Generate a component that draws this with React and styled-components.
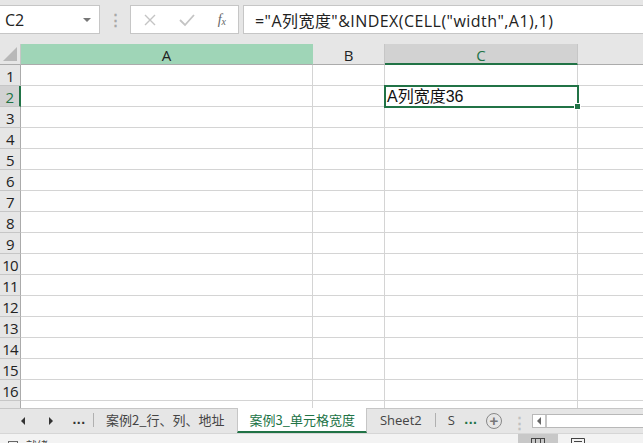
import React from 'react';
import styled, { createGlobalStyle } from 'styled-components';

const GlobalStyle = createGlobalStyle`
  html, body {
    margin: 0;
    padding: 0;
    background: #e6e6e6;
    font-family: "Liberation Sans", "Noto Sans CJK SC", sans-serif;
    overflow: hidden;
  }
`;

const COLS = [
  { name: 'A', width: 292 },
  { name: 'B', width: 72 },
  { name: 'C', width: 193 },
];
const SELECTED_COL = 'C';
const SELECTED_ROW = 2;

function App() {
  const rows = Array.from({ length: 17 }, (_, i) => i + 1);
  return (
    <Page>
      <GlobalStyle />
      <FormulaBar>
        <NameBox>
          <span>C2</span>
          <Caret />
        </NameBox>
        <Grip>⋮</Grip>
        <ActionBox>
          <svg width="14" height="14" viewBox="0 0 14 14">
            <path d="M2 2 L12 12 M12 2 L2 12" stroke="#c4c4c4" strokeWidth="1.4" />
          </svg>
          <svg width="16" height="14" viewBox="0 0 16 14">
            <path d="M1 7 L6 12 L15 2" stroke="#c4c4c4" strokeWidth="1.8" fill="none" />
          </svg>
          <Fx>
            f<sub>x</sub>
          </Fx>
        </ActionBox>
        <FormulaInput>="A列宽度"&amp;INDEX(CELL("width",A1),1)</FormulaInput>
      </FormulaBar>

      <Sheet>
        <HeaderRow>
          <Corner>
            <svg width="14" height="14" viewBox="0 0 14 14">
              <path d="M14 0 L14 14 L0 14 Z" fill="#b8b8b8" />
            </svg>
          </Corner>
          {COLS.map((c) => (
            <ColHeader key={c.name} $w={c.width} $kind={c.name === 'A' ? 'green' : c.name === SELECTED_COL ? 'sel' : ''}>
              {c.name}
            </ColHeader>
          ))}
          <ColFill />
        </HeaderRow>
        {rows.map((r) => (
          <Row key={r}>
            <RowHeader $sel={r === SELECTED_ROW}>{r}</RowHeader>
            {COLS.map((c) => (
              <Cell key={c.name} $w={c.width}>
                {r === SELECTED_ROW && c.name === SELECTED_COL && (
                  <Selection>
                    A列宽度36
                    <Handle />
                  </Selection>
                )}
              </Cell>
            ))}
            <CellFill />
          </Row>
        ))}
      </Sheet>

      <TabBar>
        <NavArrow>
          <svg width="6" height="8" viewBox="0 0 6 8"><path d="M5 0 L5 8 L1 4 Z" fill="#333" /></svg>
        </NavArrow>
        <NavArrow>
          <svg width="6" height="8" viewBox="0 0 6 8"><path d="M1 0 L1 8 L5 4 Z" fill="#333" /></svg>
        </NavArrow>
        <More>...</More>
        <Tab $first>案例2_行、列、地址</Tab>
        <Tab $active>案例3_单元格宽度</Tab>
        <Tab $latin>Sheet2</Tab>
        <Tab $latin $cut $divider>S</Tab>
        <More $green>...</More>
        <AddButton>+</AddButton>
        <Grip $tab>⋮</Grip>
        <ScrollBox>
          <svg width="6" height="8" viewBox="0 0 6 8"><path d="M5 0 L5 8 L1 4 Z" fill="#666" /></svg>
        </ScrollBox>
      </TabBar>

      <StatusBar>
        <StatusLeft>
          <svg width="10" height="8" viewBox="0 0 10 8"><rect x="0.5" y="0.5" width="9" height="7" fill="none" stroke="#666" /></svg>
          <span>就绪</span>
        </StatusLeft>
        <ViewButton $active>
          <svg width="14" height="8" viewBox="0 0 14 8"><path d="M0.5 0.5 H13.5 M4.5 0 V8 M9.5 0 V8 M0.5 0 V8 M13.5 0 V8" stroke="#444" fill="none" /></svg>
        </ViewButton>
        <ViewButton>
          <svg width="14" height="8" viewBox="0 0 14 8"><path d="M0.5 0.5 H13.5 V8 M0.5 0 V8 M3 3.5 H11" stroke="#444" fill="none" /></svg>
        </ViewButton>
      </StatusBar>
    </Page>
  );
}

export default App;

const Page = styled.div`
  width: 643px;
  height: 443px;
  display: flex;
  flex-direction: column;
  background: #e6e6e6;
  overflow: hidden;
`;

const FormulaBar = styled.div`
  height: 44px;
  box-sizing: border-box;
  padding-top: 5px;
  display: flex;
  align-items: flex-start;
  flex-shrink: 0;
`;

const NameBox = styled.div`
  width: 100px;
  height: 29px;
  box-sizing: border-box;
  background: #fff;
  border: 1px solid #c6c6c6;
  border-left: none;
  display: flex;
  align-items: center;
  justify-content: space-between;
  padding: 0 8px 0 5px;
  font-family: "Open Sans", sans-serif;
  font-size: 16px;
  color: #222;
`;

const Caret = styled.span`
  width: 0;
  height: 0;
  border-left: 4px solid transparent;
  border-right: 4px solid transparent;
  border-top: 4px solid #777;
`;

const Grip = styled.span`
  width: ${(p) => (p.$tab ? '24px' : '30px')};
  text-align: center;
  color: ${(p) => (p.$tab ? '#c0c0c0' : '#a8a8a8')};
  font-size: 15px;
  font-weight: bold;
  line-height: ${(p) => (p.$tab ? '25px' : '29px')};
`;

const ActionBox = styled.div`
  width: 109px;
  height: 29px;
  box-sizing: border-box;
  background: #fff;
  border: 1px solid #c6c6c6;
  display: flex;
  align-items: center;
  justify-content: space-between;
  padding: 0 12px 0 12px;
`;

const Fx = styled.span`
  font-family: "Liberation Serif", serif;
  font-style: italic;
  font-size: 14px;
  color: #666;
  sub {
    font-size: 10px;
    vertical-align: -1px;
  }
`;

const FormulaInput = styled.div`
  margin-left: 4px;
  flex: 1;
  height: 29px;
  box-sizing: border-box;
  background: #fff;
  border: 1px solid #c6c6c6;
  border-right: none;
  display: flex;
  align-items: center;
  padding-left: 11px;
  font-size: 16px;
  color: #222;
  white-space: nowrap;
  font-family: "Open Sans", "Noto Sans CJK SC", sans-serif;
  letter-spacing: 0.45px;
`;

const Sheet = styled.div`
  height: 364px;
  overflow: hidden;
  background: #fff;
  flex-shrink: 0;
`;

const HeaderRow = styled.div`
  display: flex;
  height: 21px;
  background: #e6e6e6;
`;

const Corner = styled.div`
  width: 21px;
  box-sizing: border-box;
  border-right: 1px solid #c6c6c6;
  border-bottom: 1px solid #ababab;
  display: flex;
  align-items: flex-end;
  justify-content: flex-end;
  padding: 0 3px 3px 0;
`;

const ColHeader = styled.div`
  width: ${(p) => p.$w}px;
  box-sizing: border-box;
  border-right: 1px solid ${(p) => (p.$kind === 'green' ? '#9fd5b7' : '#c6c6c6')};
  border-bottom: ${(p) => (p.$kind === 'sel' ? '2px solid #217346' : '1px solid #ababab')};
  background: ${(p) => (p.$kind === 'green' ? '#9fd5b7' : p.$kind === 'sel' ? '#d2d2d2' : '#e6e6e6')};
  color: ${(p) => (p.$kind === 'sel' ? '#217346' : '#222')};
  display: flex;
  align-items: center;
  justify-content: center;
  font-family: "Open Sans", sans-serif;
  font-size: 15px;
  padding-top: 2px;
`;

const ColFill = styled.div`
  flex: 1;
  border-bottom: 1px solid #ababab;
`;

const Row = styled.div`
  display: flex;
  height: 21px;
`;

const RowHeader = styled.div`
  width: 21px;
  box-sizing: border-box;
  background: ${(p) => (p.$sel ? '#d2d2d2' : '#e6e6e6')};
  border-right: ${(p) => (p.$sel ? '2px solid #217346' : '1px solid #ababab')};
  border-bottom: 1px solid #c6c6c6;
  color: ${(p) => (p.$sel ? '#217346' : '#222')};
  font-family: "Open Sans", sans-serif;
  font-size: 15px;
  display: flex;
  align-items: center;
  justify-content: center;
  padding-top: 1px;
  letter-spacing: -0.8px;
`;

const Cell = styled.div`
  position: relative;
  width: ${(p) => p.$w}px;
  box-sizing: border-box;
  border-right: 1px solid #d4d4d4;
  border-bottom: 1px solid #d4d4d4;
`;

const CellFill = styled.div`
  flex: 1;
  border-bottom: 1px solid #d4d4d4;
`;

const Selection = styled.div`
  position: absolute;
  left: -1px;
  top: -1px;
  width: 195px;
  height: 23px;
  box-sizing: border-box;
  border: 2px solid #217346;
  z-index: 2;
  background: #fff;
  font-family: "Liberation Sans", "Noto Sans CJK SC", sans-serif;
  font-size: 16px;
  color: #111;
  padding-left: 1px;
  line-height: 19px;
`;

const Handle = styled.span`
  position: absolute;
  right: -4px;
  bottom: -4px;
  width: 5px;
  height: 5px;
  background: #217346;
  border: 1px solid #fff;
`;

const TabBar = styled.div`
  height: 25px;
  box-sizing: border-box;
  border-top: 1px solid #c6c6c6;
  display: flex;
  align-items: stretch;
  padding-left: 9px;
  font-family: "Noto Sans CJK SC", sans-serif;
  font-size: 13px;
  flex-shrink: 0;
`;

const NavArrow = styled.div`
  width: 28px;
  display: flex;
  align-items: center;
  justify-content: center;
`;

const More = styled.div`
  width: ${(p) => (p.$green ? '22px' : '28px')};
  display: flex;
  align-items: center;
  justify-content: center;
  font-weight: bold;
  font-family: "Liberation Sans", sans-serif;
  font-size: 14px;
  color: ${(p) => (p.$green ? '#217346' : '#333')};
  letter-spacing: 0.5px;
  padding-bottom: 4px;
  box-sizing: border-box;
`;

const Tab = styled.div`
  position: relative;
  margin-top: -1px;
  display: flex;
  align-items: center;
  padding: ${(p) => (p.$cut ? '0 4px 0 12px' : p.$active ? '0 11px' : '0 12px')};
  color: ${(p) => (p.$active ? '#217346' : '#444')};
  background: ${(p) => (p.$active ? '#fff' : 'transparent')};
  border-left: 1px solid ${(p) => (p.$active ? '#c6c6c6' : 'transparent')};
  border-right: 1px solid ${(p) => (p.$active ? '#c6c6c6' : 'transparent')};
  border-bottom: 2px solid ${(p) => (p.$active ? '#217346' : 'transparent')};
  box-sizing: border-box;
  white-space: nowrap;
  font-family: ${(p) => (p.$latin ? '"Open Sans", sans-serif' : '"Noto Sans CJK SC", sans-serif')};
  font-size: 13px;
  &::before {
    content: '';
    position: absolute;
    left: -1px;
    top: 5px;
    bottom: 4px;
    width: 1px;
    background: #b0b0b0;
    display: ${(p) => (p.$first || p.$divider ? 'block' : 'none')};
  }
`;

const AddButton = styled.div`
  margin: 4px 6px 0 4px;
  width: 14px;
  height: 14px;
  border-radius: 50%;
  border: 1.5px solid #888;
  color: #777;
  font-family: "Liberation Sans", sans-serif;
  font-size: 15px;
  line-height: 13px;
  text-align: center;
  font-weight: bold;
`;

const ScrollBox = styled.div`
  margin: 5px 0 5px 0;
  flex: 1;
  background: #fff;
  border: 1px solid #b8b8b8;
  border-right: none;
  display: flex;
  align-items: center;
  padding-left: 3px;
  position: relative;
  &::after {
    content: '';
    position: absolute;
    left: 12px;
    top: 0;
    bottom: 0;
    width: 2px;
    background: #c6c6c6;
  }
`;

const StatusBar = styled.div`
  flex: 1;
  background: #f3f3f3;
  border-top: 1px solid #d6d6d6;
  display: flex;
  align-items: flex-start;
  font-family: "Noto Sans CJK SC", sans-serif;
  font-size: 11px;
  color: #444;
  overflow: hidden;
`;

const StatusLeft = styled.div`
  display: flex;
  align-items: center;
  gap: 8px;
  padding: 3px 0 0 8px;
  flex: 1;
`;

const ViewButton = styled.div`
  width: 40px;
  height: 12px;
  display: flex;
  justify-content: center;
  padding-top: 4px;
  background: ${(p) => (p.$active ? '#c8c8c8' : 'transparent')};
  margin-right: ${(p) => (p.$active ? '0' : '45px')};
`;
